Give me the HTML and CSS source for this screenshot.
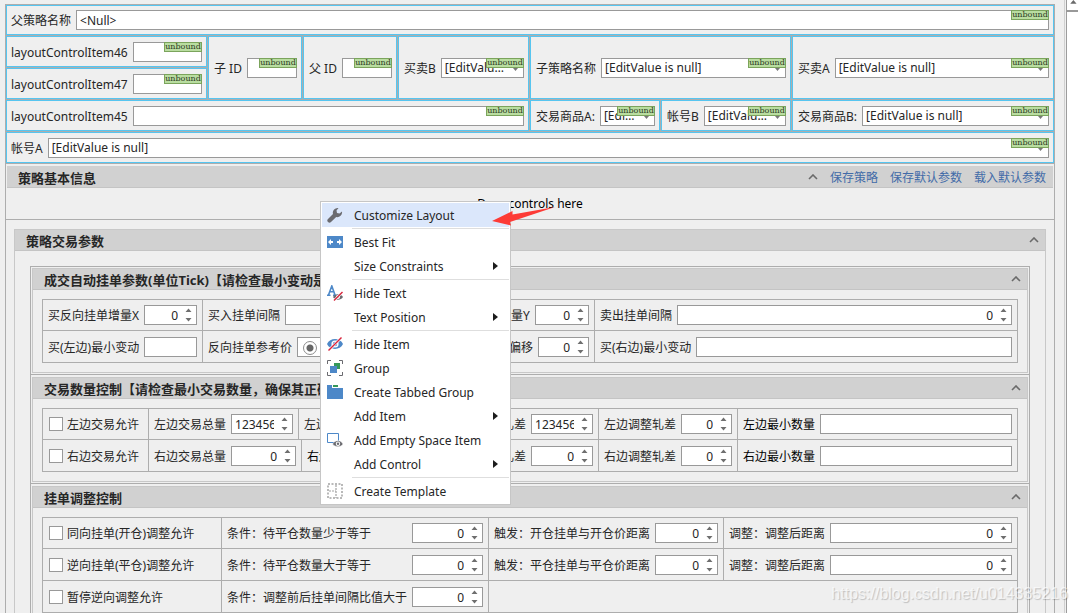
FILE: index.html
```html
<!DOCTYPE html>
<html lang="zh-CN">
<head>
    <meta charset="UTF-8">
    <meta name="viewport" content="width=device-width, initial-scale=1.0">
    <title>策略参数</title>
    <link rel="stylesheet" href="styles.css">
</head>
<body>
    <!-- Iconos compartidos -->
    <svg class="defs" aria-hidden="true">
        <symbol id="spin" viewBox="0 0 7 14">
            <path d="M0.5 4L3.5 0.5L6.5 4Z M0.5 10L3.5 13.5L6.5 10Z" fill="#6f6f6f"/>
        </symbol>
        <symbol id="drop" viewBox="0 0 5 3">
            <path d="M0 0H5L2.5 3Z" fill="#777"/>
        </symbol>
        <symbol id="caret" viewBox="0 0 10 6">
            <path d="M1 5L5 1L9 5" fill="none" stroke="#6a6a6a" stroke-width="1.6"/>
        </symbol>
        <symbol id="more" viewBox="0 0 5 8">
            <path d="M0 0L5 4L0 8Z" fill="#1c1c1c"/>
        </symbol>
    </svg>

    <div class="designer">
        <main class="layout">
            <section class="bound">
                <label class="item all"><span class="text">父策略名称</span><span class="field"><input type="text" value="&lt;Null&gt;"><span class="badge">unbound</span></span></label>

                <label class="item c1"><span class="text">layoutControlItem46</span><span class="field"><input type="text"><span class="badge">unbound</span></span></label>
                <label class="item tall c2"><span class="text">子 ID</span><span class="field"><input type="text"><span class="badge">unbound</span></span></label>
                <label class="item tall c3"><span class="text">父 ID</span><span class="field"><input type="text"><span class="badge">unbound</span></span></label>
                <label class="item tall c4"><span class="text">买卖B</span><span class="field"><select><option>[EditValue is null]</option></select><svg class="drop"><use href="#drop"/></svg><span class="badge">unbound</span></span></label>
                <label class="item tall c5"><span class="text">子策略名称</span><span class="field"><select><option>[EditValue is null]</option></select><svg class="drop"><use href="#drop"/></svg><span class="badge">unbound</span></span></label>
                <label class="item tall c6"><span class="text">买卖A</span><span class="field"><select><option>[EditValue is null]</option></select><svg class="drop"><use href="#drop"/></svg><span class="badge">unbound</span></span></label>
                <label class="item c1"><span class="text">layoutControlItem47</span><span class="field"><input type="text"><span class="badge">unbound</span></span></label>

                <label class="item half"><span class="text">layoutControlItem45</span><span class="field"><input type="text"><span class="badge">unbound</span></span></label>
                <div class="pair">
                    <label class="item"><span class="text">交易商品A:</span><span class="field"><select><option>[EditValue is null]</option></select><svg class="drop"><use href="#drop"/></svg><span class="badge">unbound</span></span></label>
                    <label class="item"><span class="text">帐号B</span><span class="field"><select><option>[EditValue is null]</option></select><svg class="drop"><use href="#drop"/></svg><span class="badge">unbound</span></span></label>
                </div>
                <label class="item c6"><span class="text">交易商品B:</span><span class="field"><select><option>[EditValue is null]</option></select><svg class="drop"><use href="#drop"/></svg><span class="badge">unbound</span></span></label>

                <label class="item all"><span class="text">帐号A</span><span class="field"><select><option>[EditValue is null]</option></select><svg class="drop"><use href="#drop"/></svg><span class="badge">unbound</span></span></label>
            </section>

            <section class="basic">
                <header class="bar">
                    <h2>策略基本信息</h2>
                    <svg class="caret"><use href="#caret"/></svg>
                    <nav>
                        <a href="#">保存策略</a>
                        <a href="#">保存默认参数</a>
                        <a href="#">载入默认参数</a>
                    </nav>
                </header>
                <p class="hint">Drop controls here</p>
            </section>

            <section class="group params">
                <header class="bar">
                    <h2>策略交易参数</h2>
                    <svg class="caret"><use href="#caret"/></svg>
                </header>
                <div class="groups">
                    <div class="slot">
                        <section class="group">
                            <header class="bar">
                                <h2>成交自动挂单参数(单位Tick)【请检查最小变动是否正确】</h2>
                                <svg class="caret"><use href="#caret"/></svg>
                            </header>
                            <div class="rows">
                                <div class="row tick-one">
                                    <label class="cell"><span class="text">买反向挂单增量X</span><span class="field"><input type="number" value="0"><svg class="spin"><use href="#spin"/></svg></span></label>
                                    <label class="cell"><span class="text">买入挂单间隔</span><span class="field"><input type="number"><svg class="spin"><use href="#spin"/></svg></span></label>
                                    <label class="cell"><span class="text">卖反向挂单增量Y</span><span class="field"><input type="number" value="0"><svg class="spin"><use href="#spin"/></svg></span></label>
                                    <label class="cell"><span class="text">卖出挂单间隔</span><span class="field"><input type="number" value="0"><svg class="spin"><use href="#spin"/></svg></span></label>
                                </div>
                                <div class="row tick-two">
                                    <label class="cell"><span class="text">买(左边)最小变动</span><span class="field"><input type="text"></span></label>
                                    <label class="cell"><span class="text">反向挂单参考价</span><span class="field"><input type="radio" name="ref" checked></span></label>
                                    <label class="cell"><span class="text">反向挂单偏移</span><span class="field"><input type="number" value="0"><svg class="spin"><use href="#spin"/></svg></span></label>
                                    <label class="cell"><span class="text">买(右边)最小变动</span><span class="field"><input type="text"></span></label>
                                </div>
                            </div>
                        </section>
                    </div>

                    <div class="slot">
                        <section class="group">
                            <header class="bar">
                                <h2>交易数量控制【请检查最小交易数量，确保其正确】</h2>
                                <svg class="caret"><use href="#caret"/></svg>
                            </header>
                            <div class="rows">
                                <div class="row count-one">
                                    <label class="cell check"><input type="checkbox"><span class="text">左边交易允许</span></label>
                                    <label class="cell"><span class="text">左边交易总量</span><span class="field"><input type="number" value="1234567"><svg class="spin"><use href="#spin"/></svg></span></label>
                                    <label class="cell"><span class="text">左边单笔数量</span><span class="field"><input type="number"><svg class="spin"><use href="#spin"/></svg></span></label>
                                    <label class="cell"><span class="text">左边交易轧差</span><span class="field"><input type="number" value="1234567"><svg class="spin"><use href="#spin"/></svg></span></label>
                                    <label class="cell"><span class="text">左边调整轧差</span><span class="field"><input type="number" value="0"><svg class="spin"><use href="#spin"/></svg></span></label>
                                    <label class="cell dark"><span class="text">左边最小数量</span><span class="field"><input type="text"></span></label>
                                </div>
                                <div class="row count-two">
                                    <label class="cell check"><input type="checkbox"><span class="text">右边交易允许</span></label>
                                    <label class="cell"><span class="text">右边交易总量</span><span class="field"><input type="number" value="0"><svg class="spin"><use href="#spin"/></svg></span></label>
                                    <label class="cell dark"><span class="text">右边单笔数量</span><span class="field"><input type="number"><svg class="spin"><use href="#spin"/></svg></span></label>
                                    <label class="cell"><span class="text">右边交易轧差</span><span class="field"><input type="number" value="0"><svg class="spin"><use href="#spin"/></svg></span></label>
                                    <label class="cell"><span class="text">右边调整轧差</span><span class="field"><input type="number" value="0"><svg class="spin"><use href="#spin"/></svg></span></label>
                                    <label class="cell dark"><span class="text">右边最小数量</span><span class="field"><input type="text"></span></label>
                                </div>
                            </div>
                        </section>
                    </div>

                    <div class="slot">
                        <section class="group">
                            <header class="bar">
                                <h2>挂单调整控制</h2>
                                <svg class="caret"><use href="#caret"/></svg>
                            </header>
                            <div class="rows">
                                <div class="row adjust">
                                    <label class="cell check"><input type="checkbox"><span class="text">同向挂单(开仓)调整允许</span></label>
                                    <label class="cell wide"><span class="text">条件：待平仓数量少于等于</span><span class="field"><input type="number" value="0"><svg class="spin"><use href="#spin"/></svg></span></label>
                                    <label class="cell"><span class="text">触发：开仓挂单与开仓价距离</span><span class="field"><input type="number" value="0"><svg class="spin"><use href="#spin"/></svg></span></label>
                                    <label class="cell"><span class="text">调整：调整后距离</span><span class="field"><input type="number" value="0"><svg class="spin"><use href="#spin"/></svg></span></label>
                                </div>
                                <div class="row adjust">
                                    <label class="cell check"><input type="checkbox"><span class="text">逆向挂单(平仓)调整允许</span></label>
                                    <label class="cell wide"><span class="text">条件：待平仓数量大于等于</span><span class="field"><input type="number" value="0"><svg class="spin"><use href="#spin"/></svg></span></label>
                                    <label class="cell"><span class="text">触发：平仓挂单与平仓价距离</span><span class="field"><input type="number" value="0"><svg class="spin"><use href="#spin"/></svg></span></label>
                                    <label class="cell"><span class="text">调整：调整后距离</span><span class="field"><input type="number" value="0"><svg class="spin"><use href="#spin"/></svg></span></label>
                                </div>
                                <div class="row stop">
                                    <label class="cell check"><input type="checkbox"><span class="text">暂停逆向调整允许</span></label>
                                    <label class="cell wide"><span class="text">条件：调整前后挂单间隔比值大于</span><span class="field"><input type="number" value="0"><svg class="spin"><use href="#spin"/></svg></span></label>
                                    <div class="cell"></div>
                                </div>
                            </div>
                        </section>
                    </div>
                </div>
            </section>
        </main>
        <div class="scroll">
            <svg viewBox="0 0 11 11">
                <path d="M3 4L6.500 0L10 4Z" fill="#6a6a6a"/>
            </svg>
        </div>
    </div>

    <!-- Menú contextual -->
    <menu class="popup">
        <li><button type="button" class="active">
            <svg viewBox="0 0 16 16"><path d="M15 4.500L12.500 6.500L10 6L9.500 3.500L11.500 1A4.800 4.800 0 0 0 6 7L1 12A2 2 0 0 0 4 15L9.200 10A4.800 4.800 0 0 0 15 4.500Z" fill="#6b6b70"/></svg>
            <span>Customize Layout</span></button></li>
        <li class="line"></li>
        <li><button type="button">
            <svg viewBox="0 0 16 16"><path d="M0 2H16V14H0Z" fill="#4d88c8"/><path d="M1 8L4 5V7H6V9H4V11Z M15 8L12 5V7H10V9H12V11Z" fill="#fff"/></svg>
            <span>Best Fit</span></button></li>
        <li><button type="button"><i></i><span>Size Constraints</span><svg class="more"><use href="#more"/></svg></button></li>
        <li class="line"></li>
        <li><button type="button">
            <svg viewBox="0 0 16 16"><path d="M0 10.200H3.500M6 10.200H9.500M1.500 10L4.800 1L8 10M3 6.800H7" fill="none" stroke="#4d88c8" stroke-width="1.600"/><path d="M6 12C8 8.300 14 8.300 16 12C14 15.500 8 15.500 6 12Z" fill="#6b6b70"/><circle cx="11" cy="12" r="2" fill="#fff"/><circle cx="11" cy="12" r="1" fill="#6b6b70"/><path d="M7 15.500L15.500 7" stroke="#fff" stroke-width="2.400"/><path d="M7 15.500L15.500 7" stroke="#d8243c" stroke-width="1.400"/></svg>
            <span>Hide Text</span></button></li>
        <li><button type="button"><i></i><span>Text Position</span><svg class="more"><use href="#more"/></svg></button></li>
        <li class="line"></li>
        <li><button type="button">
            <svg viewBox="0 0 16 16"><path d="M0 8C3 1.200 13 1.200 16 8C13 14.500 3 14.500 0 8Z" fill="#4d88c8"/><circle cx="8" cy="8" r="3.600" fill="#fff"/><circle cx="8" cy="8" r="2.200" fill="#4d88c8"/><path d="M2 14L14 2" stroke="#fff" stroke-width="2.600"/><path d="M1.500 14.500L14.500 1.500" stroke="#d8243c" stroke-width="1.500"/></svg>
            <span>Hide Item</span></button></li>
        <li><button type="button">
            <svg viewBox="0 0 16 16"><path d="M0.500 4V0.500H4M12 0.500H15.500V4M15.500 12V15.500H12M4 15.500H0.500V12" fill="none" stroke="#6b6b70"/><path d="M7 3H13V9H7Z" fill="#35985a"/><path d="M3 6H10V13H3Z" fill="#4d88c8"/></svg>
            <span>Group</span></button></li>
        <li><button type="button">
            <svg viewBox="0 0 16 16"><path d="M0 1H5V4H16V15H0Z" fill="#4d88c8"/><path d="M6 1H11V3H6Z" fill="#35985a"/></svg>
            <span>Create Tabbed Group</span></button></li>
        <li><button type="button"><i></i><span>Add Item</span><svg class="more"><use href="#more"/></svg></button></li>
        <li><button type="button">
            <svg viewBox="0 0 16 16"><path d="M0.500 1.500H11.500V10.500H0.500Z" fill="#fff" stroke="#4d88c8"/><path d="M5.500 12C8 7.500 14 7.500 16 12C14 15.500 8 15.500 5.500 12Z" fill="#6b6b70" stroke="#fff" stroke-width="0.500"/><circle cx="11" cy="11.800" r="2.200" fill="#fff"/><circle cx="11" cy="11.800" r="1.200" fill="#6b6b70"/></svg>
            <span>Add Empty Space Item</span></button></li>
        <li><button type="button"><i></i><span>Add Control</span><svg class="more"><use href="#more"/></svg></button></li>
        <li class="line"></li>
        <li><button type="button">
            <svg viewBox="0 0 16 16"><path d="M1 1H15V15H1Z" fill="none" stroke="#a2a2a2" stroke-width="1.500" stroke-dasharray="2 1.500"/><path d="M9 2V15M2 8H9" fill="none" stroke="#a2a2a2" stroke-width="1.200" stroke-dasharray="2 1"/></svg>
            <span>Create Template</span></button></li>
    </menu>
    <svg class="pointer" viewBox="0 0 64 20">
        <path d="M0 15L20.500 5L20.500 8.500L63 1L18 16L19 19.500Z" fill="#fd3b36"/>
    </svg>
    <p class="mark">https://blog.csdn.net/u014335216</p>
</body>
</html>
```
FILE: styles.css
```css
* {
    box-sizing: border-box;
}
body {
    font-family: 'Noto Sans', 'Noto Sans CJK SC', sans-serif;
    font-size: 12px;
    line-height: 16px;
    margin: 0;
    height: 100vh;
    overflow: hidden;
    position: relative;
    background-color: #efefef;
    color: #262626;
}
.defs {
    display: none;
}
.designer {
    display: flex;
    height: 100%;
    overflow: hidden;
}
.layout {
    flex: 1;
    min-width: 0;
    align-self: flex-start;
    margin: 4px 9px 0 5px;
    border: 1px solid #adadad;
}
.scroll {
    width: 14px;
    border-left: 1px solid #d0d0d0;
    background: linear-gradient(to right, #efefef 1px, #9c9c9c 1px, #9c9c9c 2px, #fff 2px);
}
.scroll svg {
    display: block;
    width: 13px;
    height: 12px;
    margin-left: 1px;
    border-bottom: 2px solid #999;
    overflow: visible;
}

/* Campos superiores */
.bound {
    display: grid;
    grid-template-columns: 201fr 94fr 94fr 131fr 261fr 262fr;
    gap: 1px;
    background-color: #adadad;
    border-bottom: 1px solid #adadad;
}
.item {
    display: flex;
    align-items: center;
    gap: 5px;
    min-width: 0;
    padding: 5px 4px 4px 5px;
    background-color: #efefef;
    border: 1px solid #56c5f0;
}
.item.all:first-child {
    padding-top: 4px;
}
.all, .c1, .half {
    padding-left: 4px;
}
.all {
    grid-column: 1 / -1;
}
.tall {
    grid-row: 2 / span 2;
}
.c1 {
    grid-column: 1;
}
.c2 {
    grid-column: 2;
}
.c3 {
    grid-column: 3;
}
.c4 {
    grid-column: 4;
}
.c5 {
    grid-column: 5;
}
.c6 {
    grid-column: 6;
}
.half {
    grid-column: 1 / span 4;
}
.pair {
    display: grid;
    grid-template-columns: 1fr 1fr;
    gap: 1px;
}
.text {
    padding-top: 2px;
    white-space: nowrap;
}
.field {
    display: flex;
    align-items: center;
    flex: 1;
    min-width: 0;
    height: 20px;
    position: relative;
    background-color: #fff;
    border: 1px solid #999;
}
.field input, .field select {
    flex: 1;
    width: 0;
    min-width: 0;
    height: 18px;
    padding: 0 3px;
    border: none;
    outline: none;
    background: none;
    color: #262626;
    font: inherit;
    appearance: none;
}
.field select {
    padding-right: 16px;
    text-overflow: ellipsis;
}
.field input[type="number"] {
    padding-right: 0;
    text-align: right;
    appearance: textfield;
}
.field input::-webkit-inner-spin-button {
    display: none;
}
.spin {
    flex: none;
    width: 7px;
    height: 14px;
    margin: 0 4px 0 7px;
}
.drop {
    position: absolute;
    right: 5px;
    top: 9px;
    width: 5px;
    height: 3px;
}
.badge {
    position: absolute;
    top: -1px;
    right: -1px;
    width: 38px;
    height: 10px;
    border: 1px solid #7ba45c;
    background-color: #b9dda0;
    color: #2c3a24;
    font: 8px/7px 'DejaVu Serif', serif;
    text-align: center;
}

/* Grupos */
.bar {
    display: flex;
    align-items: center;
    height: 22px;
    background-color: #d1d1d1;
    border-bottom: 1px solid #c4c4c4;
    padding: 0 7px 0 11px;
}
.bar h2 {
    margin: 0 auto 0 0;
    padding-top: 2px;
    font-size: 13px;
    font-weight: bold;
    white-space: nowrap;
}
.caret {
    width: 10px;
    height: 6px;
}
.bar nav {
    display: flex;
    gap: 12px;
    margin-left: 12px;
    padding-top: 2px;
}
.bar a {
    color: #426ba8;
    text-decoration: none;
}
.basic {
    padding: 2px 1px 0;
    border-bottom: 1px solid #adadad;
}
.hint {
    margin: 0;
    padding: 8px 0 7px;
    text-align: center;
    color: #000;
}
.group {
    border: 1px solid #c8c8c8;
}
.group > .bar {
    height: 21px;
    padding-right: 6px;
}
.params {
    margin: 9px 8px 0;
}
.groups {
    margin: 15px 15px 0;
    border: 1px solid #adadad;
}
.slot {
    padding: 1px 1px 1px;
}
.slot + .slot {
    padding-top: 2px;
    border-top: 1px solid #adadad;
}
.rows {
    margin: 9px 9px 9px;
    border: 1px solid #adadad;
}
.row {
    display: grid;
}
.row + .row {
    border-top: 1px solid #adadad;
}
.cell {
    display: flex;
    align-items: center;
    gap: 5px;
    min-width: 0;
    padding: 5px;
}
.row + .row .cell {
    padding-top: 6px;
}
.cell + .cell {
    border-left: 1px solid #adadad;
}
.tick-one {
    grid-template-columns: 159fr 231fr 161fr 423fr;
}
.tick-two {
    grid-template-columns: 159fr 253fr 139fr 423fr;
}
.count-one {
    grid-template-columns: 105fr 150fr 150fr 150fr 139fr 280fr;
}
.count-two {
    grid-template-columns: 105fr 153fr 147fr 150fr 139fr 280fr;
}
.adjust {
    grid-template-columns: 178fr 267fr 235fr 294fr;
}
.stop {
    grid-template-columns: 178fr 267fr 529fr;
}
.wide .text {
    min-width: 180px;
}
.dark {
    color: #000;
}
.check {
    gap: 4px;
    padding-left: 6px;
}
.check input {
    width: 14px;
    height: 14px;
    margin: 0;
    border: 1px solid #999;
    background-color: #fff;
    appearance: none;
}
.field input[type="radio"] {
    flex: none;
    width: 14px;
    height: 14px;
    margin: 2px 5px 0;
    padding: 0;
    border: 1px solid #8c8c8c;
    border-radius: 50%;
    background: radial-gradient(circle, #666 3px, #fff 4px);
}

/* Menú */
.popup {
    position: absolute;
    left: 320px;
    top: 201px;
    width: 191px;
    margin: 0;
    padding: 1px;
    list-style: none;
    background-color: #fff;
    border: 1px solid #c6c6c6;
}
.popup button {
    display: flex;
    align-items: center;
    gap: 11px;
    width: 100%;
    height: 24px;
    padding: 0 11px 0 5px;
    border: none;
    background: none;
    color: #262626;
    font: inherit;
    text-align: left;
}
.popup button.active {
    background-color: #dbe7fb;
}
.popup span {
    padding-top: 2px;
}
.popup svg, .popup i {
    flex: none;
    width: 16px;
    height: 16px;
}
.popup .more {
    width: 5px;
    height: 8px;
    margin-left: auto;
}
.popup .line {
    height: 1px;
    margin: 1px 0 1px 30px;
    background-color: #dedede;
}
.pointer {
    position: absolute;
    left: 492px;
    top: 206px;
    width: 64px;
    height: 20px;
}
.mark {
    position: absolute;
    right: 10px;
    bottom: 9px;
    margin: 0;
    font: 16px/20px 'Liberation Sans', sans-serif;
    color: rgba(255, 255, 255, 0.7);
    text-shadow: 1px 1px 1px rgba(0, 0, 0, 0.2);
}
```
